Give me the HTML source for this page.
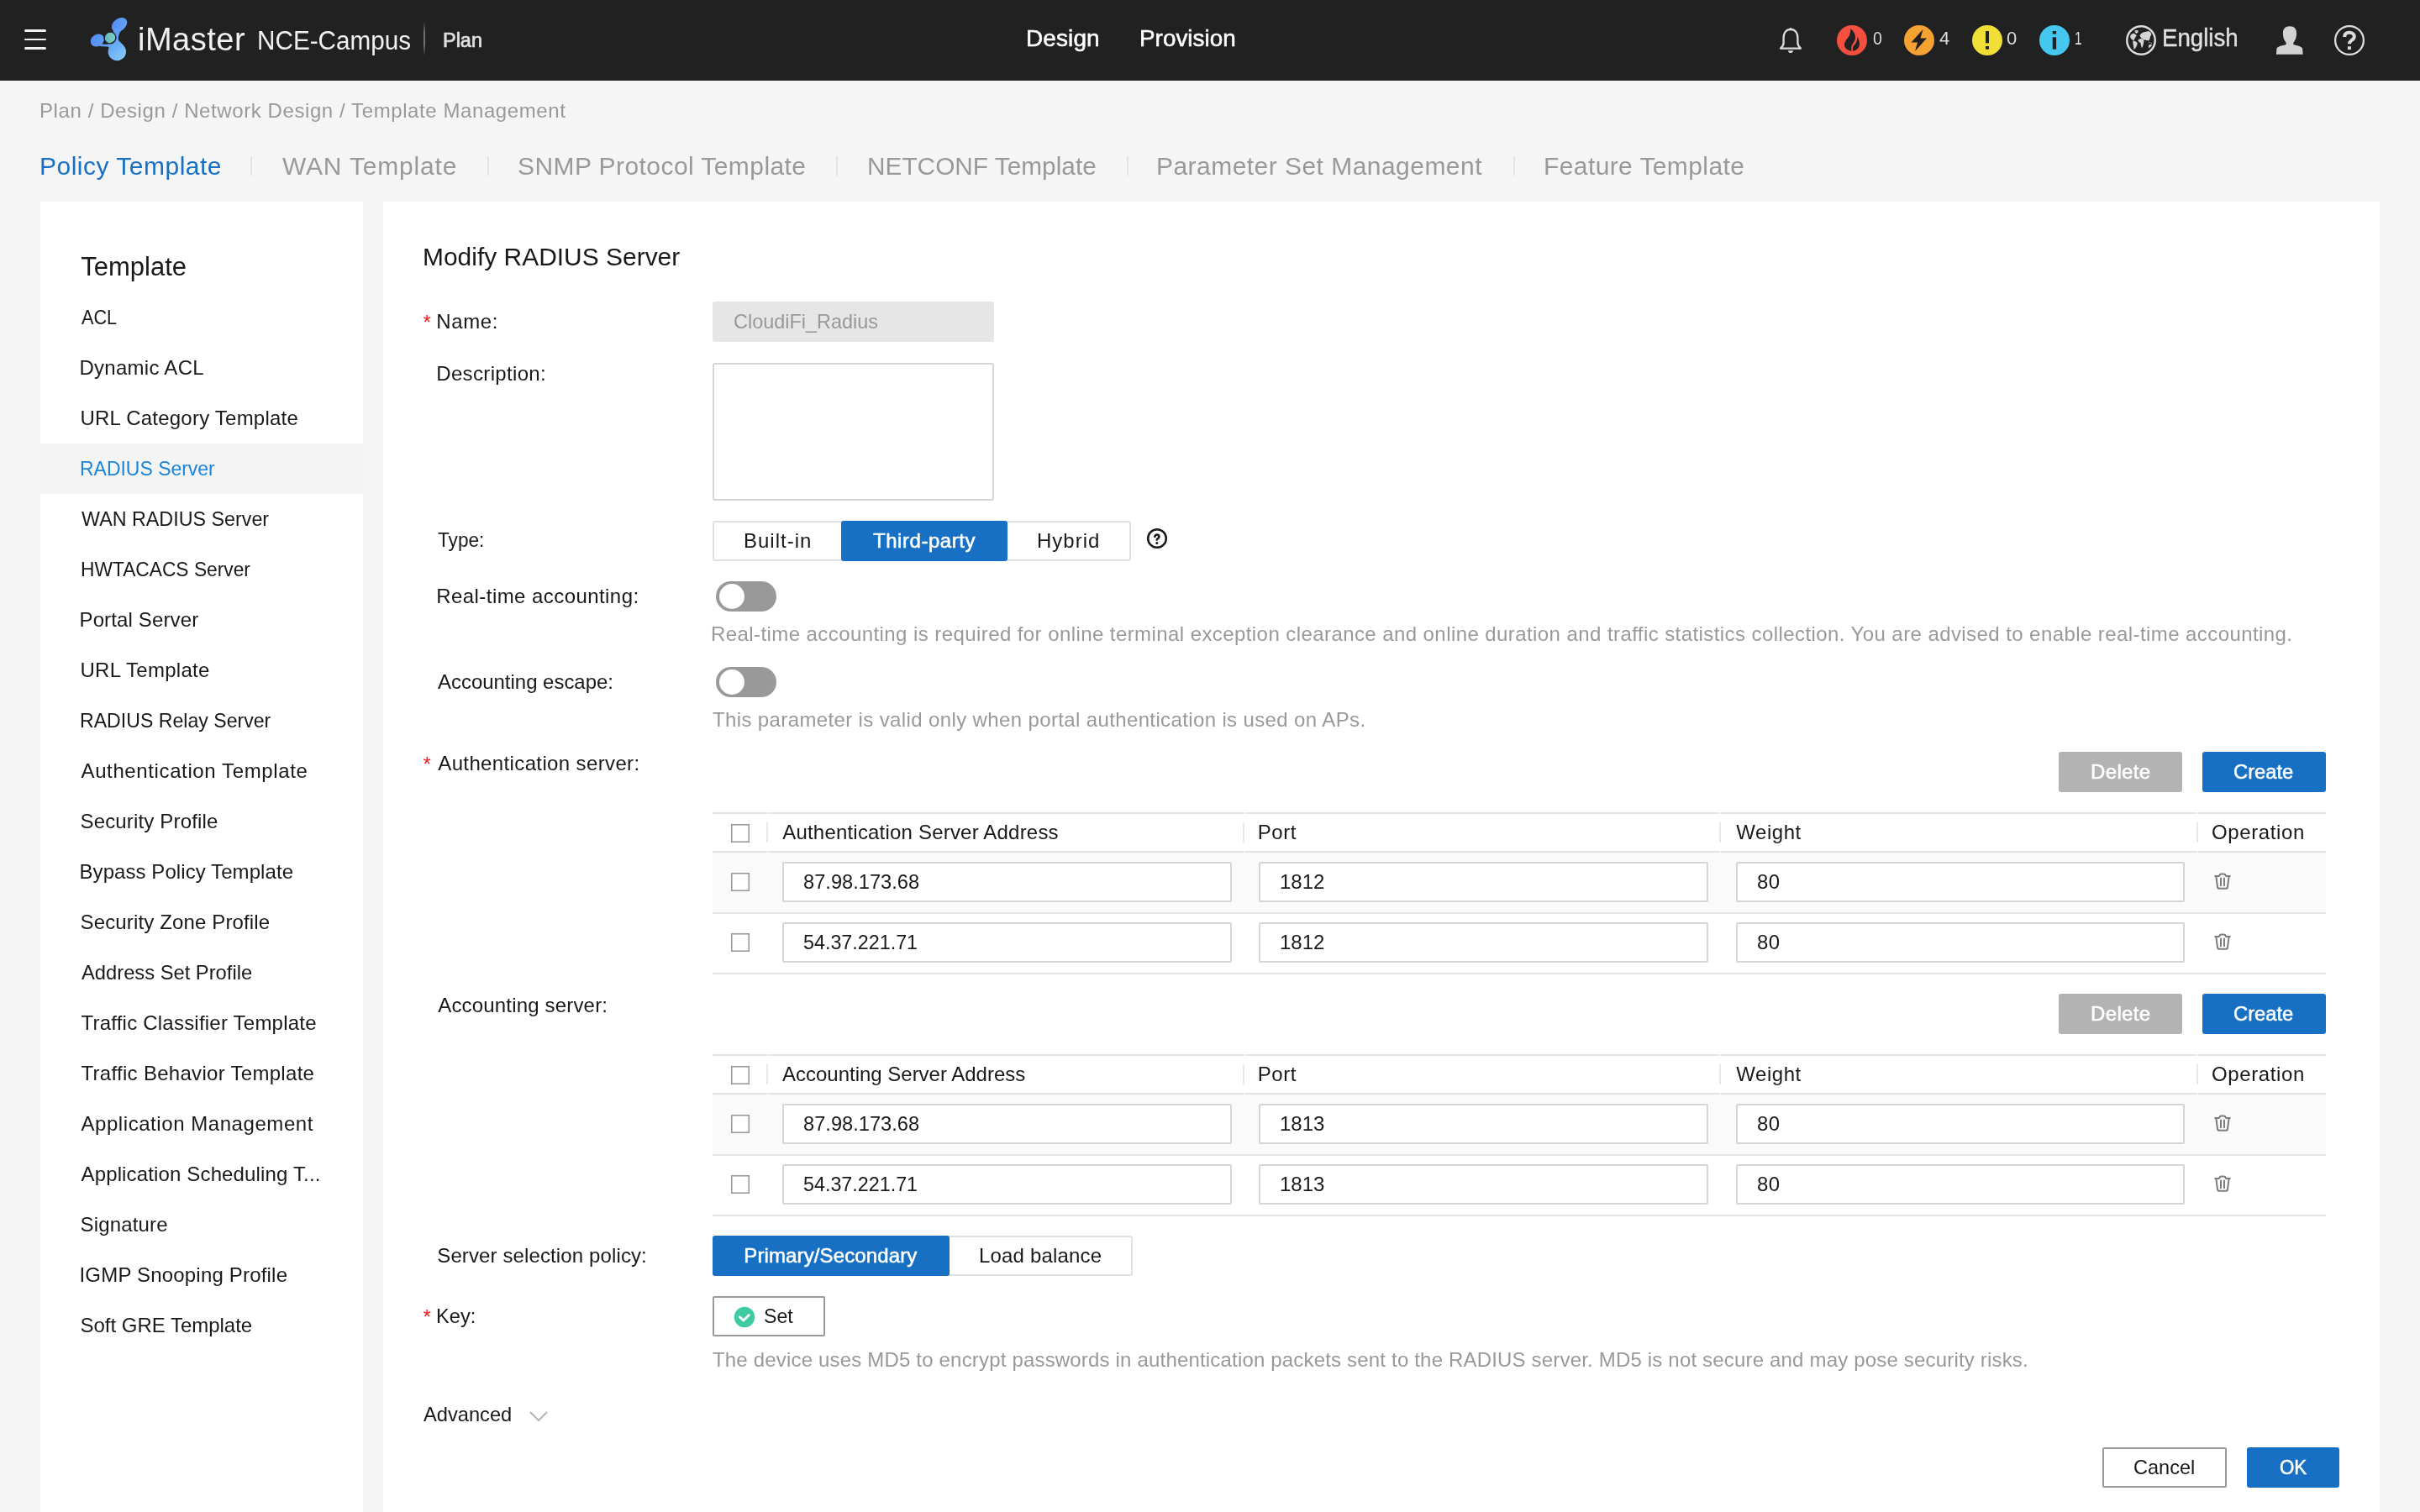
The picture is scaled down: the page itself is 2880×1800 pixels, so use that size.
<!DOCTYPE html>
<html><head><meta charset="utf-8"><title>iMaster NCE-Campus</title>
<style>
html,body{margin:0;padding:0;width:100%;height:100%;min-height:100%;overflow:hidden;background:#f5f5f5;font-family:"Liberation Sans", sans-serif;}
.t{position:absolute;white-space:nowrap;}
#root{position:absolute;left:0;top:0;width:2880px;height:1800px;will-change:transform;overflow:hidden;}
@media (max-width:2000px){#root{zoom:0.5;}}
.b{position:absolute;}
</style></head><body><div id="root">
<div class="b" style="left:0px;top:0px;width:2880px;height:96px;background:#212121"></div>
<div class="b" style="left:29px;top:35.1px;width:26px;height:2.799999999999997px;background:#f2f2f2;border-radius:2px"></div>
<div class="b" style="left:29px;top:45.6px;width:26px;height:2.799999999999997px;background:#f2f2f2;border-radius:2px"></div>
<div class="b" style="left:29px;top:56.1px;width:26px;height:2.799999999999997px;background:#f2f2f2;border-radius:2px"></div>
<svg class="b" style="left:100px;top:16px" width="60" height="60" viewBox="0 0 60 60">
<defs>
<linearGradient id="lgA" gradientUnits="userSpaceOnUse" x1="10" y1="10" x2="48" y2="56"><stop offset="0" stop-color="#4a7ef0"/><stop offset="0.55" stop-color="#62a2f6"/><stop offset="1" stop-color="#86ccfb"/></linearGradient>
<linearGradient id="lgT" gradientUnits="userSpaceOnUse" x1="25" y1="35" x2="37" y2="23"><stop offset="0" stop-color="#5fb2bc"/><stop offset="1" stop-color="#82d8c6"/></linearGradient>
</defs>
<g fill="url(#lgA)">
<ellipse cx="42" cy="13.4" rx="10.2" ry="7.3" transform="rotate(-38 42 13.4)"/>
<ellipse cx="15.8" cy="32" rx="8.6" ry="7" transform="rotate(-35 15.8 32)"/>
<circle cx="39.3" cy="45.5" r="10.7"/>
<path d="M34.5 17 L45.5 18.5 C42.5 22 40.8 25.5 40.8 30 L41.5 37 L33.5 37 C35 31 35.5 24 34.5 17 Z"/>
<path d="M20.5 36 C24 37 27 36.8 30 36.8 L30.5 40 C26 39.3 21.5 39.8 17.8 38.6 Z"/>
<path d="M27.5 33.5 L41 32 L47 38 L30 42 Z"/>
</g>
<ellipse cx="31" cy="28.9" rx="7.5" ry="7.7" transform="rotate(40 31 28.9)" fill="#212121"/>
<ellipse cx="31" cy="28.9" rx="6" ry="6.4" transform="rotate(40 31 28.9)" fill="url(#lgT)"/>
</svg>
<div id="e1" class="t" style="left:164.00px;top:27.83px;font-size:38px;line-height:38px;color:#f0f0f0;font-weight:normal;letter-spacing:0.500px;">iMaster</div>
<div id="e2" class="t nce" style="left:305.60px;top:33.36px;font-size:31px;line-height:31px;color:#f0f0f0;font-weight:normal;transform:scaleX(0.9580);transform-origin:0 0;">NCE-Campus</div>
<div class="b" style="left:504.2px;top:27px;width:1.6000000000000227px;height:38px;background:linear-gradient(#2a2a2a,#707070 30%,#707070 70%,#2a2a2a)"></div>
<div id="e3" class="t plan" style="left:526.60px;top:36.53px;font-size:23px;line-height:23px;color:#e0e0e0;font-weight:normal;transform:scaleX(1.0201);transform-origin:0 0;-webkit-text-stroke:0.7px #e0e0e0;">Plan</div>
<div id="e4" class="t design" style="left:1221.00px;top:32.30px;font-size:28px;line-height:28px;color:#ffffff;font-weight:normal;letter-spacing:0.100px;-webkit-text-stroke:0.55px currentColor;">Design</div>
<div id="e5" class="t prov" style="left:1356.00px;top:32.30px;font-size:28px;line-height:28px;color:#ffffff;font-weight:normal;transform:scaleX(0.9956);transform-origin:0 0;-webkit-text-stroke:0.55px currentColor;">Provision</div>
<svg class="b" style="left:2114px;top:30px" width="34" height="36" viewBox="0 0 34 36">
<path d="M17 5 C11.5 5 8.6 9.5 8.6 15 L8.6 21 C8.6 23.8 7 25.8 5 27.6 L29 27.6 C27 25.8 25.4 23.8 25.4 21 L25.4 15 C25.4 9.5 22.5 5 17 5 Z" fill="none" stroke="#dcdcdc" stroke-width="2.3" stroke-linejoin="round"/>
<path d="M13.8 30.2 C14.3 32.2 15.5 33 17 33 C18.5 33 19.7 32.2 20.2 30.2 Z" fill="#dcdcdc"/>
<circle cx="17" cy="4.2" r="1.3" fill="#dcdcdc"/>
</svg>
<svg class="b" style="left:2186px;top:30px" width="36" height="36" viewBox="0 0 36 36"><circle cx="18" cy="18" r="18" fill="#f5503f"/><path d="M16.3 4.3 C16.3 9 15.5 12 13.5 14.5 C10.5 18 9 20.5 9 23.5 C9 27 12.5 30 17.6 30.8 C17 27.5 17 24.5 19 22 C21 19.5 22 17 22 14 C22 10 19.5 7 16.3 4.3 Z" fill="#212121"/><path d="M24.5 14.1 C26 17 27 19.5 27 22.5 C27 27 23.5 30 19.2 30.8 C18.7 28 18.8 26 20 24.5 C22.5 22 24 20 24.5 14.1 Z" fill="#212121"/></svg>
<svg class="b" style="left:2266px;top:30px" width="36" height="36" viewBox="0 0 36 36"><circle cx="18" cy="18" r="18" fill="#f5a232"/><path d="M22.5 5 L8.5 20.5 L16 20.5 L13 31 L27 15.5 L19.5 15.5 Z" fill="#212121"/></svg>
<svg class="b" style="left:2347px;top:30px" width="36" height="36" viewBox="0 0 36 36"><circle cx="18" cy="18" r="18" fill="#f0df36"/><rect x="16" y="7" width="4" height="14.3" fill="#212121"/><rect x="16" y="25" width="4" height="3.7" fill="#212121"/></svg>
<svg class="b" style="left:2427px;top:30px" width="36" height="36" viewBox="0 0 36 36"><circle cx="18" cy="18" r="18" fill="#44c8ef"/><rect x="15.7" y="7" width="4.4" height="3.5" fill="#212121"/><rect x="15.7" y="14.3" width="4.4" height="14.4" fill="#212121"/></svg>
<div id="e6" class="t" style="left:2229.00px;top:35.38px;font-size:22px;line-height:22px;color:#dcdcdc;font-weight:normal;transform:scaleX(0.8912);transform-origin:0 0;">0</div>
<div id="e7" class="t" style="left:2308.00px;top:35.38px;font-size:22px;line-height:22px;color:#dcdcdc;font-weight:normal;">4</div>
<div id="e8" class="t" style="left:2388.00px;top:35.38px;font-size:22px;line-height:22px;color:#dcdcdc;font-weight:normal;">0</div>
<div id="e9" class="t" style="left:2469.00px;top:35.38px;font-size:22px;line-height:22px;color:#dcdcdc;font-weight:normal;transform:scaleX(0.7030);transform-origin:0 0;">1</div>
<svg class="b" style="left:2530px;top:30px" width="36" height="36" viewBox="0 0 36 36">
<circle cx="18" cy="18" r="16.75" fill="none" stroke="#dcdcdc" stroke-width="2.5"/>
<g fill="#d4d4d4">
<path d="M10.5 6.3 L14.6 5.9 L14.4 9 L12 9.8 L11 8.6 Z"/>
<path d="M5.3 12.2 C6.8 10.2 8.3 9.4 9.5 9.7 L11.5 11 L12.8 12.6 L11.2 14.5 L10.2 16.5 L9.2 18.2 L7 17 L5.2 14.6 Z"/>
<path d="M8.4 18.3 L12 19.5 L13.8 21.2 L13.1 24 L11.6 27 L9.6 29.1 L9 25 L8.3 21 Z"/>
<path d="M16.4 12.4 L18 10 L20.5 8.5 L23 7.9 L27 7.1 L29.5 8.4 L30.3 11 L28.9 14 L28.2 17 L26.9 18.4 L24 17.8 L21 17.5 L20 16 L18.4 15.4 Z"/>
<path d="M14.6 17.2 L17.5 16 L20.6 16.6 L21.3 18.6 L21 22 L20.1 25 L19 27.3 L18 24.5 L17.5 21.2 L15.6 20.1 L14.4 18.6 Z"/>
<path d="M26.8 19.8 L28.4 20.1 L28.1 21.6 Z"/><path d="M29 20.7 L31.2 21.5 L30.6 22.2 Z"/>
<path d="M27.4 23.6 L30.1 22.7 L31 24 L29.1 26.1 L27.2 27.2 L26.8 25 Z"/>
</g>
</svg>
<div id="e10" class="t eng" style="left:2573.00px;top:31.45px;font-size:29px;line-height:29px;color:#e0e0e0;font-weight:normal;transform:scaleX(0.9523);transform-origin:0 0;-webkit-text-stroke:0.4px currentColor;">English</div>
<svg class="b" style="left:2706px;top:29px" width="38" height="38" viewBox="0 0 38 38">
<path d="M19 2.2 C13.5 2.2 10.9 5.5 10.9 10.5 C10.9 15 12.3 19.3 14.6 21.8 L14.6 23.9 C10.5 25.2 5 25.9 3.5 28.6 L2.9 35.7 L34.7 35.7 L34.1 28.6 C32.6 25.9 27.5 25.2 23.4 23.9 L23.4 21.8 C25.7 19.3 27.1 15 27.1 10.5 C27.1 5.5 24.5 2.2 19 2.2 Z" fill="#d2d2d2"/>
</svg>
<svg class="b" style="left:2777px;top:29px" width="38" height="38" viewBox="0 0 38 38">
<circle cx="19" cy="19" r="16.9" fill="none" stroke="#dcdcdc" stroke-width="2.3"/>
<path d="M13.2 15 C13.2 11.2 15.8 9.7 18.9 9.7 C22.2 9.7 24.8 11.6 24.8 14.5 C24.8 17.2 22.7 18.2 21 19.5 C19.7 20.5 19 21.2 19 23.3" fill="none" stroke="#dcdcdc" stroke-width="4"/>
<rect x="16.9" y="26.3" width="4" height="3.7" fill="#dcdcdc"/>
</svg>
<div id="e11" class="t bc" style="left:47.00px;top:119.68px;font-size:24px;line-height:24px;color:#999999;font-weight:normal;letter-spacing:0.588px;">Plan / Design / Network Design / Template Management</div>
<div id="e12" class="t tab0" style="left:47.00px;top:182.60px;font-size:30px;line-height:30px;color:#1770c4;font-weight:normal;letter-spacing:0.500px;">Policy Template</div>
<div id="e13" class="t tab1" style="left:336.00px;top:182.60px;font-size:30px;line-height:30px;color:#999999;font-weight:normal;letter-spacing:0.818px;">WAN Template</div>
<div id="e14" class="t tab2" style="left:616.00px;top:182.60px;font-size:30px;line-height:30px;color:#999999;font-weight:normal;letter-spacing:0.429px;">SNMP Protocol Template</div>
<div id="e15" class="t tab3" style="left:1031.50px;top:182.60px;font-size:30px;line-height:30px;color:#999999;font-weight:normal;transform:scaleX(0.9936);transform-origin:0 0;">NETCONF Template</div>
<div id="e16" class="t tab4" style="left:1376.00px;top:182.60px;font-size:30px;line-height:30px;color:#999999;font-weight:normal;letter-spacing:0.461px;">Parameter Set Management</div>
<div id="e17" class="t tab5" style="left:1837.00px;top:182.60px;font-size:30px;line-height:30px;color:#999999;font-weight:normal;letter-spacing:0.400px;">Feature Template</div>
<div class="b" style="left:298px;top:186px;width:2px;height:23px;background:#e4e4e4"></div>
<div class="b" style="left:580px;top:186px;width:2px;height:23px;background:#e4e4e4"></div>
<div class="b" style="left:995px;top:186px;width:2px;height:23px;background:#e4e4e4"></div>
<div class="b" style="left:1341px;top:186px;width:2px;height:23px;background:#e4e4e4"></div>
<div class="b" style="left:1801px;top:186px;width:2px;height:23px;background:#e4e4e4"></div>
<div class="b" style="left:48px;top:240px;width:384px;height:1560px;background:#ffffff"></div>
<div id="e18" class="t" style="left:96.25px;top:301.76px;font-size:31px;line-height:31px;color:#191919;font-weight:normal;">Template</div>
<div id="e19" class="t" style="left:96.50px;top:365.68px;font-size:24px;line-height:24px;color:#191919;font-weight:normal;transform:scaleX(0.9027);transform-origin:0 0;">ACL</div>
<div id="e20" class="t" style="left:94.50px;top:425.68px;font-size:24px;line-height:24px;color:#191919;font-weight:normal;letter-spacing:0.270px;">Dynamic ACL</div>
<div id="e21" class="t" style="left:95.50px;top:485.68px;font-size:24px;line-height:24px;color:#191919;font-weight:normal;letter-spacing:0.225px;">URL Category Template</div>
<div class="b" style="left:48px;top:528px;width:384px;height:60px;background:#f4f4f4"></div>
<div id="e22" class="t" style="left:94.50px;top:545.68px;font-size:24px;line-height:24px;color:#1a85db;font-weight:normal;transform:scaleX(0.9567);transform-origin:0 0;">RADIUS Server</div>
<div id="e23" class="t" style="left:96.50px;top:605.68px;font-size:24px;line-height:24px;color:#191919;font-weight:normal;transform:scaleX(0.9709);transform-origin:0 0;">WAN RADIUS Server</div>
<div id="e24" class="t" style="left:95.50px;top:665.68px;font-size:24px;line-height:24px;color:#191919;font-weight:normal;transform:scaleX(0.9484);transform-origin:0 0;">HWTACACS Server</div>
<div id="e25" class="t" style="left:94.50px;top:725.68px;font-size:24px;line-height:24px;color:#191919;font-weight:normal;letter-spacing:0.133px;">Portal Server</div>
<div id="e26" class="t" style="left:95.50px;top:785.68px;font-size:24px;line-height:24px;color:#191919;font-weight:normal;letter-spacing:0.282px;">URL Template</div>
<div id="e27" class="t" style="left:94.50px;top:845.68px;font-size:24px;line-height:24px;color:#191919;font-weight:normal;transform:scaleX(0.9628);transform-origin:0 0;">RADIUS Relay Server</div>
<div id="e28" class="t" style="left:96.50px;top:905.68px;font-size:24px;line-height:24px;color:#191919;font-weight:normal;letter-spacing:0.618px;">Authentication Template</div>
<div id="e29" class="t" style="left:95.50px;top:965.68px;font-size:24px;line-height:24px;color:#191919;font-weight:normal;letter-spacing:0.167px;">Security Profile</div>
<div id="e30" class="t" style="left:94.50px;top:1025.68px;font-size:24px;line-height:24px;color:#191919;font-weight:normal;letter-spacing:0.071px;">Bypass Policy Template</div>
<div id="e31" class="t" style="left:95.50px;top:1085.68px;font-size:24px;line-height:24px;color:#191919;font-weight:normal;letter-spacing:0.145px;">Security Zone Profile</div>
<div id="e32" class="t" style="left:96.50px;top:1145.68px;font-size:24px;line-height:24px;color:#191919;font-weight:normal;transform:scaleX(0.9888);transform-origin:0 0;">Address Set Profile</div>
<div id="e33" class="t" style="left:96.50px;top:1205.68px;font-size:24px;line-height:24px;color:#191919;font-weight:normal;letter-spacing:0.219px;">Traffic Classifier Template</div>
<div id="e34" class="t" style="left:96.50px;top:1265.68px;font-size:24px;line-height:24px;color:#191919;font-weight:normal;letter-spacing:0.296px;">Traffic Behavior Template</div>
<div id="e35" class="t" style="left:96.50px;top:1325.68px;font-size:24px;line-height:24px;color:#191919;font-weight:normal;letter-spacing:0.557px;">Application Management</div>
<div id="e36" class="t" style="left:96.50px;top:1385.68px;font-size:24px;line-height:24px;color:#191919;font-weight:normal;letter-spacing:0.146px;">Application Scheduling T...</div>
<div id="e37" class="t" style="left:95.50px;top:1445.68px;font-size:24px;line-height:24px;color:#191919;font-weight:normal;letter-spacing:0.175px;">Signature</div>
<div id="e38" class="t" style="left:94.50px;top:1505.68px;font-size:24px;line-height:24px;color:#191919;font-weight:normal;letter-spacing:0.190px;">IGMP Snooping Profile</div>
<div id="e39" class="t" style="left:95.50px;top:1565.68px;font-size:24px;line-height:24px;color:#191919;font-weight:normal;letter-spacing:-0.019px;">Soft GRE Template</div>
<div class="b" style="left:456px;top:240px;width:2376px;height:1560px;background:#ffffff"></div>
<div id="e40" class="t" style="left:503.00px;top:290.61px;font-size:30px;line-height:30px;color:#191919;font-weight:normal;transform:scaleX(0.9984);transform-origin:0 0;">Modify RADIUS Server</div>
<div id="e41" class="t" style="left:503.50px;top:372.18px;font-size:24px;line-height:24px;color:#f01e1e;font-weight:normal;">*</div>
<div id="e42" class="t" style="left:519.25px;top:371.18px;font-size:24px;line-height:24px;color:#191919;font-weight:normal;letter-spacing:0.625px;">Name:</div>
<div class="b" style="left:848px;top:359px;width:335px;height:48px;background:#e6e6e6;border-radius:3px"></div>
<div id="e43" class="t" style="left:873.00px;top:370.68px;font-size:24px;line-height:24px;color:#999999;font-weight:normal;transform:scaleX(0.9770);transform-origin:0 0;">CloudiFi_Radius</div>
<div id="e44" class="t" style="left:519.25px;top:433.43px;font-size:24px;line-height:24px;color:#191919;font-weight:normal;letter-spacing:0.341px;">Description:</div>
<div class="b" style="left:848px;top:432px;width:335px;height:164px;border:2px solid #d6d6d6;border-radius:3px;box-sizing:border-box;background:#fff"></div>
<div id="e45" class="t" style="left:521.25px;top:630.68px;font-size:24px;line-height:24px;color:#191919;font-weight:normal;transform:scaleX(0.9432);transform-origin:0 0;">Type:</div>
<div class="b" style="left:848px;top:620px;width:498px;height:48px;border:2px solid #e0e0e0;box-sizing:border-box;border-radius:3px"></div>
<div class="b" style="left:1001px;top:620px;width:198px;height:48px;background:#1770c4;border-radius:3px"></div>
<div id="e46" class="t" style="left:885.00px;top:631.68px;font-size:24px;line-height:24px;color:#191919;font-weight:normal;letter-spacing:1.000px;">Built-in</div>
<div id="e47" class="t" style="left:1039.00px;top:631.68px;font-size:24px;line-height:24px;color:#ffffff;font-weight:normal;letter-spacing:0.550px;-webkit-text-stroke:0.55px currentColor;">Third-party</div>
<div id="e48" class="t" style="left:1234.00px;top:631.68px;font-size:24px;line-height:24px;color:#191919;font-weight:normal;letter-spacing:1.000px;">Hybrid</div>
<svg class="b" style="left:1364px;top:628px" width="26" height="26" viewBox="0 0 26 26">
<circle cx="13" cy="13" r="10.8" fill="none" stroke="#191919" stroke-width="2.5"/>
<path d="M10.4 10.9 C10.6 9.3 11.6 8.5 12.9 8.5 C14.4 8.5 15.4 9.5 15.4 10.9 C15.4 12.2 14.5 12.8 13.8 13.3 C13.2 13.8 12.8 14 12.8 14.4" fill="none" stroke="#191919" stroke-width="2.6" stroke-linecap="round"/>
<circle cx="12.8" cy="18.4" r="1.5" fill="#191919"/>
</svg>
<div id="e49" class="t" style="left:519.25px;top:698.43px;font-size:24px;line-height:24px;color:#191919;font-weight:normal;letter-spacing:0.437px;">Real-time accounting:</div>
<div class="b" style="left:852px;top:692px;width:72px;height:36px;background:#999999;border-radius:18px"></div>
<div class="b" style="left:856px;top:695px;width:30px;height:30px;background:#ffffff;border-radius:50%"></div>
<div id="e50" class="t hint1" style="left:846.00px;top:743.43px;font-size:24px;line-height:24px;color:#999999;font-weight:normal;letter-spacing:0.422px;">Real-time accounting is required for online terminal exception clearance and online duration and traffic statistics collection. You are advised to enable real-time accounting.</div>
<div id="e51" class="t" style="left:521.25px;top:799.68px;font-size:24px;line-height:24px;color:#191919;font-weight:normal;transform:scaleX(0.9976);transform-origin:0 0;">Accounting escape:</div>
<div class="b" style="left:852px;top:794px;width:72px;height:36px;background:#999999;border-radius:18px"></div>
<div class="b" style="left:856px;top:797px;width:30px;height:30px;background:#ffffff;border-radius:50%"></div>
<div id="e52" class="t hint2" style="left:848.00px;top:844.68px;font-size:24px;line-height:24px;color:#999999;font-weight:normal;letter-spacing:0.371px;">This parameter is valid only when portal authentication is used on APs.</div>
<div id="e53" class="t" style="left:503.50px;top:897.68px;font-size:24px;line-height:24px;color:#f01e1e;font-weight:normal;">*</div>
<div id="e54" class="t" style="left:521.25px;top:896.68px;font-size:24px;line-height:24px;color:#191919;font-weight:normal;letter-spacing:0.369px;">Authentication server:</div>
<div class="b" style="left:2450px;top:895px;width:147px;height:48px;background:#b3b3b3;border-radius:3px"></div>
<div id="e55" class="t del" style="left:2488.00px;top:906.68px;font-size:24px;line-height:24px;color:#ffffff;font-weight:normal;letter-spacing:0.350px;-webkit-text-stroke:0.55px currentColor;">Delete</div>
<div class="b" style="left:2621px;top:895px;width:147px;height:48px;background:#1770c4;border-radius:3px"></div>
<div id="e56" class="t cre" style="left:2658.00px;top:906.68px;font-size:24px;line-height:24px;color:#ffffff;font-weight:normal;transform:scaleX(0.9896);transform-origin:0 0;-webkit-text-stroke:0.55px currentColor;">Create</div>
<div class="b" style="left:848px;top:967px;width:1920px;height:2px;background:#e3e3e3"></div>
<div class="b" style="left:848px;top:1013px;width:1920px;height:2px;background:#e3e3e3"></div>
<svg class="b" style="left:869px;top:980px" width="25" height="25" viewBox="0 0 25 25"><rect x="1.75" y="1.75" width="20.5" height="20.5" fill="#fff" stroke="#9a9a9a" stroke-width="1.6"/></svg>
<div class="b" style="left:912px;top:979px;width:2px;height:24px;background:#e8e8e8"></div>
<div class="b" style="left:1479px;top:979px;width:2px;height:24px;background:#e8e8e8"></div>
<div class="b" style="left:2046px;top:979px;width:2px;height:24px;background:#e8e8e8"></div>
<div class="b" style="left:2614px;top:979px;width:2px;height:24px;background:#e8e8e8"></div>
<div id="e57" class="t" style="left:931.25px;top:979.18px;font-size:24px;line-height:24px;color:#191919;font-weight:normal;letter-spacing:0.196px;">Authentication Server Address</div>
<div id="e58" class="t" style="left:1496.75px;top:979.18px;font-size:24px;line-height:24px;color:#191919;font-weight:normal;letter-spacing:0.583px;">Port</div>
<div id="e59" class="t" style="left:2066.25px;top:979.18px;font-size:24px;line-height:24px;color:#191919;font-weight:normal;letter-spacing:0.550px;">Weight</div>
<div id="e60" class="t" style="left:2632.00px;top:979.18px;font-size:24px;line-height:24px;color:#191919;font-weight:normal;letter-spacing:0.625px;">Operation</div>
<div class="b" style="left:912.5px;top:967px;width:1.5px;height:2px;background:#ffffff"></div>
<div class="b" style="left:1479.5px;top:967px;width:1.5px;height:2px;background:#ffffff"></div>
<div class="b" style="left:2046.5px;top:967px;width:1.5px;height:2px;background:#ffffff"></div>
<div class="b" style="left:2614.5px;top:967px;width:1.5px;height:2px;background:#ffffff"></div>
<div class="b" style="left:912.5px;top:1013px;width:1.5px;height:2px;background:#ffffff"></div>
<div class="b" style="left:1479.5px;top:1013px;width:1.5px;height:2px;background:#ffffff"></div>
<div class="b" style="left:2046.5px;top:1013px;width:1.5px;height:2px;background:#ffffff"></div>
<div class="b" style="left:2614.5px;top:1013px;width:1.5px;height:2px;background:#ffffff"></div>
<div class="b" style="left:912.5px;top:1085px;width:1.5px;height:2px;background:#ffffff"></div>
<div class="b" style="left:1479.5px;top:1085px;width:1.5px;height:2px;background:#ffffff"></div>
<div class="b" style="left:2046.5px;top:1085px;width:1.5px;height:2px;background:#ffffff"></div>
<div class="b" style="left:2614.5px;top:1085px;width:1.5px;height:2px;background:#ffffff"></div>
<div class="b" style="left:912.5px;top:1157px;width:1.5px;height:2px;background:#ffffff"></div>
<div class="b" style="left:1479.5px;top:1157px;width:1.5px;height:2px;background:#ffffff"></div>
<div class="b" style="left:2046.5px;top:1157px;width:1.5px;height:2px;background:#ffffff"></div>
<div class="b" style="left:2614.5px;top:1157px;width:1.5px;height:2px;background:#ffffff"></div>
<div class="b" style="left:848px;top:1015px;width:1920px;height:71px;background:#fafafa"></div>
<div class="b" style="left:848px;top:1086px;width:1920px;height:2px;background:#e3e3e3"></div>
<svg class="b" style="left:869px;top:1038px" width="25" height="25" viewBox="0 0 25 25"><rect x="1.75" y="1.75" width="20.5" height="20.5" fill="#fff" stroke="#9a9a9a" stroke-width="1.6"/></svg>
<div class="b" style="left:931px;top:1026px;width:535px;height:48px;border:2px solid #d6d6d6;box-sizing:border-box;background:#fff;border-radius:2px"></div>
<div id="e61" class="t" style="left:956.00px;top:1037.68px;font-size:24px;line-height:24px;color:#191919;font-weight:normal;transform:scaleX(0.9855);transform-origin:0 0;">87.98.173.68</div>
<div class="b" style="left:1498px;top:1026px;width:535px;height:48px;border:2px solid #d6d6d6;box-sizing:border-box;background:#fff;border-radius:2px"></div>
<div id="e62" class="t" style="left:1523.00px;top:1037.68px;font-size:24px;line-height:24px;color:#191919;font-weight:normal;">1812</div>
<div class="b" style="left:2065.5px;top:1026px;width:534.5px;height:48px;border:2px solid #d6d6d6;box-sizing:border-box;background:#fff;border-radius:2px"></div>
<div id="e63" class="t" style="left:2091.00px;top:1037.68px;font-size:24px;line-height:24px;color:#191919;font-weight:normal;letter-spacing:0.500px;">80</div>
<svg class="b" style="left:2634px;top:1038px" width="22" height="22" viewBox="0 0 22 22">
<path d="M2.2 5 L6.9 5 C7.4 3.2 7.9 2.4 9.6 2.4 L12.4 2.4 C14.1 2.4 14.6 3.2 15.1 5 L19.8 5" stroke="#7d7d7d" stroke-width="2" fill="none" stroke-linecap="round" stroke-linejoin="round"/>
<path d="M3.4 5.5 L5 18 C5.2 19.4 6.2 19.8 7.5 19.8 L14.5 19.8 C15.8 19.8 16.8 19.4 17 18 L18.6 5.5" stroke="#7d7d7d" stroke-width="2" fill="none"/>
<path d="M9 7.6 L9 16.3 M13 7.6 L13 16.3" stroke="#7d7d7d" stroke-width="2" fill="none" stroke-linecap="round"/>
</svg>
<div class="b" style="left:848px;top:1158px;width:1920px;height:2px;background:#e3e3e3"></div>
<svg class="b" style="left:869px;top:1110px" width="25" height="25" viewBox="0 0 25 25"><rect x="1.75" y="1.75" width="20.5" height="20.5" fill="#fff" stroke="#9a9a9a" stroke-width="1.6"/></svg>
<div class="b" style="left:931px;top:1098px;width:535px;height:48px;border:2px solid #d6d6d6;box-sizing:border-box;background:#fff;border-radius:2px"></div>
<div id="e64" class="t" style="left:956.00px;top:1109.68px;font-size:24px;line-height:24px;color:#191919;font-weight:normal;transform:scaleX(0.9710);transform-origin:0 0;">54.37.221.71</div>
<div class="b" style="left:1498px;top:1098px;width:535px;height:48px;border:2px solid #d6d6d6;box-sizing:border-box;background:#fff;border-radius:2px"></div>
<div id="e65" class="t" style="left:1523.00px;top:1109.68px;font-size:24px;line-height:24px;color:#191919;font-weight:normal;">1812</div>
<div class="b" style="left:2065.5px;top:1098px;width:534.5px;height:48px;border:2px solid #d6d6d6;box-sizing:border-box;background:#fff;border-radius:2px"></div>
<div id="e66" class="t" style="left:2091.00px;top:1109.68px;font-size:24px;line-height:24px;color:#191919;font-weight:normal;letter-spacing:0.500px;">80</div>
<svg class="b" style="left:2634px;top:1110px" width="22" height="22" viewBox="0 0 22 22">
<path d="M2.2 5 L6.9 5 C7.4 3.2 7.9 2.4 9.6 2.4 L12.4 2.4 C14.1 2.4 14.6 3.2 15.1 5 L19.8 5" stroke="#7d7d7d" stroke-width="2" fill="none" stroke-linecap="round" stroke-linejoin="round"/>
<path d="M3.4 5.5 L5 18 C5.2 19.4 6.2 19.8 7.5 19.8 L14.5 19.8 C15.8 19.8 16.8 19.4 17 18 L18.6 5.5" stroke="#7d7d7d" stroke-width="2" fill="none"/>
<path d="M9 7.6 L9 16.3 M13 7.6 L13 16.3" stroke="#7d7d7d" stroke-width="2" fill="none" stroke-linecap="round"/>
</svg>
<div id="e67" class="t" style="left:521.25px;top:1185.18px;font-size:24px;line-height:24px;color:#191919;font-weight:normal;letter-spacing:0.174px;">Accounting server:</div>
<div class="b" style="left:2450px;top:1183px;width:147px;height:48px;background:#b3b3b3;border-radius:3px"></div>
<div id="e68" class="t del" style="left:2488.00px;top:1194.68px;font-size:24px;line-height:24px;color:#ffffff;font-weight:normal;letter-spacing:0.350px;-webkit-text-stroke:0.55px currentColor;">Delete</div>
<div class="b" style="left:2621px;top:1183px;width:147px;height:48px;background:#1770c4;border-radius:3px"></div>
<div id="e69" class="t cre" style="left:2658.00px;top:1194.68px;font-size:24px;line-height:24px;color:#ffffff;font-weight:normal;transform:scaleX(0.9896);transform-origin:0 0;-webkit-text-stroke:0.55px currentColor;">Create</div>
<div class="b" style="left:848px;top:1255px;width:1920px;height:2px;background:#e3e3e3"></div>
<div class="b" style="left:848px;top:1301px;width:1920px;height:2px;background:#e3e3e3"></div>
<svg class="b" style="left:869px;top:1268px" width="25" height="25" viewBox="0 0 25 25"><rect x="1.75" y="1.75" width="20.5" height="20.5" fill="#fff" stroke="#9a9a9a" stroke-width="1.6"/></svg>
<div class="b" style="left:912px;top:1267px;width:2px;height:24px;background:#e8e8e8"></div>
<div class="b" style="left:1479px;top:1267px;width:2px;height:24px;background:#e8e8e8"></div>
<div class="b" style="left:2046px;top:1267px;width:2px;height:24px;background:#e8e8e8"></div>
<div class="b" style="left:2614px;top:1267px;width:2px;height:24px;background:#e8e8e8"></div>
<div id="e70" class="t" style="left:931.25px;top:1267.18px;font-size:24px;line-height:24px;color:#191919;font-weight:normal;transform:scaleX(0.9991);transform-origin:0 0;">Accounting Server Address</div>
<div id="e71" class="t" style="left:1496.75px;top:1267.18px;font-size:24px;line-height:24px;color:#191919;font-weight:normal;letter-spacing:0.583px;">Port</div>
<div id="e72" class="t" style="left:2066.25px;top:1267.18px;font-size:24px;line-height:24px;color:#191919;font-weight:normal;letter-spacing:0.550px;">Weight</div>
<div id="e73" class="t" style="left:2632.00px;top:1267.18px;font-size:24px;line-height:24px;color:#191919;font-weight:normal;letter-spacing:0.625px;">Operation</div>
<div class="b" style="left:912.5px;top:1255px;width:1.5px;height:2px;background:#ffffff"></div>
<div class="b" style="left:1479.5px;top:1255px;width:1.5px;height:2px;background:#ffffff"></div>
<div class="b" style="left:2046.5px;top:1255px;width:1.5px;height:2px;background:#ffffff"></div>
<div class="b" style="left:2614.5px;top:1255px;width:1.5px;height:2px;background:#ffffff"></div>
<div class="b" style="left:912.5px;top:1301px;width:1.5px;height:2px;background:#ffffff"></div>
<div class="b" style="left:1479.5px;top:1301px;width:1.5px;height:2px;background:#ffffff"></div>
<div class="b" style="left:2046.5px;top:1301px;width:1.5px;height:2px;background:#ffffff"></div>
<div class="b" style="left:2614.5px;top:1301px;width:1.5px;height:2px;background:#ffffff"></div>
<div class="b" style="left:912.5px;top:1373px;width:1.5px;height:2px;background:#ffffff"></div>
<div class="b" style="left:1479.5px;top:1373px;width:1.5px;height:2px;background:#ffffff"></div>
<div class="b" style="left:2046.5px;top:1373px;width:1.5px;height:2px;background:#ffffff"></div>
<div class="b" style="left:2614.5px;top:1373px;width:1.5px;height:2px;background:#ffffff"></div>
<div class="b" style="left:912.5px;top:1445px;width:1.5px;height:2px;background:#ffffff"></div>
<div class="b" style="left:1479.5px;top:1445px;width:1.5px;height:2px;background:#ffffff"></div>
<div class="b" style="left:2046.5px;top:1445px;width:1.5px;height:2px;background:#ffffff"></div>
<div class="b" style="left:2614.5px;top:1445px;width:1.5px;height:2px;background:#ffffff"></div>
<div class="b" style="left:848px;top:1303px;width:1920px;height:71px;background:#fafafa"></div>
<div class="b" style="left:848px;top:1374px;width:1920px;height:2px;background:#e3e3e3"></div>
<svg class="b" style="left:869px;top:1326px" width="25" height="25" viewBox="0 0 25 25"><rect x="1.75" y="1.75" width="20.5" height="20.5" fill="#fff" stroke="#9a9a9a" stroke-width="1.6"/></svg>
<div class="b" style="left:931px;top:1314px;width:535px;height:48px;border:2px solid #d6d6d6;box-sizing:border-box;background:#fff;border-radius:2px"></div>
<div id="e74" class="t" style="left:956.00px;top:1325.68px;font-size:24px;line-height:24px;color:#191919;font-weight:normal;transform:scaleX(0.9855);transform-origin:0 0;">87.98.173.68</div>
<div class="b" style="left:1498px;top:1314px;width:535px;height:48px;border:2px solid #d6d6d6;box-sizing:border-box;background:#fff;border-radius:2px"></div>
<div id="e75" class="t" style="left:1523.00px;top:1325.68px;font-size:24px;line-height:24px;color:#191919;font-weight:normal;">1813</div>
<div class="b" style="left:2065.5px;top:1314px;width:534.5px;height:48px;border:2px solid #d6d6d6;box-sizing:border-box;background:#fff;border-radius:2px"></div>
<div id="e76" class="t" style="left:2091.00px;top:1325.68px;font-size:24px;line-height:24px;color:#191919;font-weight:normal;letter-spacing:0.500px;">80</div>
<svg class="b" style="left:2634px;top:1326px" width="22" height="22" viewBox="0 0 22 22">
<path d="M2.2 5 L6.9 5 C7.4 3.2 7.9 2.4 9.6 2.4 L12.4 2.4 C14.1 2.4 14.6 3.2 15.1 5 L19.8 5" stroke="#7d7d7d" stroke-width="2" fill="none" stroke-linecap="round" stroke-linejoin="round"/>
<path d="M3.4 5.5 L5 18 C5.2 19.4 6.2 19.8 7.5 19.8 L14.5 19.8 C15.8 19.8 16.8 19.4 17 18 L18.6 5.5" stroke="#7d7d7d" stroke-width="2" fill="none"/>
<path d="M9 7.6 L9 16.3 M13 7.6 L13 16.3" stroke="#7d7d7d" stroke-width="2" fill="none" stroke-linecap="round"/>
</svg>
<div class="b" style="left:848px;top:1446px;width:1920px;height:2px;background:#e3e3e3"></div>
<svg class="b" style="left:869px;top:1398px" width="25" height="25" viewBox="0 0 25 25"><rect x="1.75" y="1.75" width="20.5" height="20.5" fill="#fff" stroke="#9a9a9a" stroke-width="1.6"/></svg>
<div class="b" style="left:931px;top:1386px;width:535px;height:48px;border:2px solid #d6d6d6;box-sizing:border-box;background:#fff;border-radius:2px"></div>
<div id="e77" class="t" style="left:956.00px;top:1397.68px;font-size:24px;line-height:24px;color:#191919;font-weight:normal;transform:scaleX(0.9710);transform-origin:0 0;">54.37.221.71</div>
<div class="b" style="left:1498px;top:1386px;width:535px;height:48px;border:2px solid #d6d6d6;box-sizing:border-box;background:#fff;border-radius:2px"></div>
<div id="e78" class="t" style="left:1523.00px;top:1397.68px;font-size:24px;line-height:24px;color:#191919;font-weight:normal;">1813</div>
<div class="b" style="left:2065.5px;top:1386px;width:534.5px;height:48px;border:2px solid #d6d6d6;box-sizing:border-box;background:#fff;border-radius:2px"></div>
<div id="e79" class="t" style="left:2091.00px;top:1397.68px;font-size:24px;line-height:24px;color:#191919;font-weight:normal;letter-spacing:0.500px;">80</div>
<svg class="b" style="left:2634px;top:1398px" width="22" height="22" viewBox="0 0 22 22">
<path d="M2.2 5 L6.9 5 C7.4 3.2 7.9 2.4 9.6 2.4 L12.4 2.4 C14.1 2.4 14.6 3.2 15.1 5 L19.8 5" stroke="#7d7d7d" stroke-width="2" fill="none" stroke-linecap="round" stroke-linejoin="round"/>
<path d="M3.4 5.5 L5 18 C5.2 19.4 6.2 19.8 7.5 19.8 L14.5 19.8 C15.8 19.8 16.8 19.4 17 18 L18.6 5.5" stroke="#7d7d7d" stroke-width="2" fill="none"/>
<path d="M9 7.6 L9 16.3 M13 7.6 L13 16.3" stroke="#7d7d7d" stroke-width="2" fill="none" stroke-linecap="round"/>
</svg>
<div id="e80" class="t" style="left:520.25px;top:1482.68px;font-size:24px;line-height:24px;color:#191919;font-weight:normal;letter-spacing:0.120px;">Server selection policy:</div>
<div class="b" style="left:848px;top:1471px;width:500px;height:48px;border:2px solid #e0e0e0;box-sizing:border-box;border-radius:3px"></div>
<div class="b" style="left:848px;top:1471px;width:282px;height:48px;background:#1770c4;border-radius:3px"></div>
<div id="e81" class="t ps" style="left:885.25px;top:1482.68px;font-size:24px;line-height:24px;color:#ffffff;font-weight:normal;letter-spacing:0.125px;-webkit-text-stroke:0.55px currentColor;">Primary/Secondary</div>
<div id="e82" class="t lb" style="left:1165.00px;top:1482.68px;font-size:24px;line-height:24px;color:#191919;font-weight:normal;letter-spacing:0.182px;">Load balance</div>
<div id="e83" class="t" style="left:503.50px;top:1555.68px;font-size:24px;line-height:24px;color:#f01e1e;font-weight:normal;">*</div>
<div id="e84" class="t" style="left:519.25px;top:1554.68px;font-size:24px;line-height:24px;color:#191919;font-weight:normal;transform:scaleX(0.9855);transform-origin:0 0;">Key:</div>
<div class="b" style="left:848px;top:1543px;width:133.5px;height:47.5px;border:2px solid #9a9a9a;box-sizing:border-box;border-radius:2px;background:#fff"></div>
<svg class="b" style="left:873px;top:1555px" width="26" height="26" viewBox="0 0 26 26">
<circle cx="13" cy="13" r="12.2" fill="#3ecba2"/>
<path d="M7.3 12.8 L11.8 17 L18.3 10.5" stroke="#ffffff" stroke-width="2.9" fill="none" stroke-linecap="round" stroke-linejoin="round"/>
</svg>
<div id="e85" class="t" style="left:909.00px;top:1554.68px;font-size:24px;line-height:24px;color:#191919;font-weight:normal;transform:scaleX(0.9649);transform-origin:0 0;">Set</div>
<div id="e86" class="t hint3" style="left:848.00px;top:1606.68px;font-size:24px;line-height:24px;color:#999999;font-weight:normal;letter-spacing:0.180px;">The device uses MD5 to encrypt passwords in authentication packets sent to the RADIUS server. MD5 is not secure and may pose security risks.</div>
<div id="e87" class="t" style="left:504.25px;top:1672.43px;font-size:24px;line-height:24px;color:#191919;font-weight:normal;transform:scaleX(0.9859);transform-origin:0 0;">Advanced</div>
<svg class="b" style="left:628px;top:1676px" width="26" height="20" viewBox="0 0 26 20">
<path d="M3 5 L13 15 L23 5" stroke="#b5b5b5" stroke-width="2" fill="none"/>
</svg>
<div class="b" style="left:2502px;top:1723px;width:148px;height:48px;border:2px solid #9a9a9a;box-sizing:border-box;border-radius:2px;background:#fff"></div>
<div id="e88" class="t cancel" style="left:2539.00px;top:1734.68px;font-size:24px;line-height:24px;color:#191919;font-weight:normal;transform:scaleX(0.9796);transform-origin:0 0;">Cancel</div>
<div class="b" style="left:2674px;top:1723px;width:110px;height:48px;background:#1770c4;border-radius:3px"></div>
<div id="e89" class="t ok" style="left:2713.00px;top:1734.68px;font-size:24px;line-height:24px;color:#ffffff;font-weight:normal;transform:scaleX(0.9278);transform-origin:0 0;-webkit-text-stroke:0.55px currentColor;">OK</div>
</div></body></html>
